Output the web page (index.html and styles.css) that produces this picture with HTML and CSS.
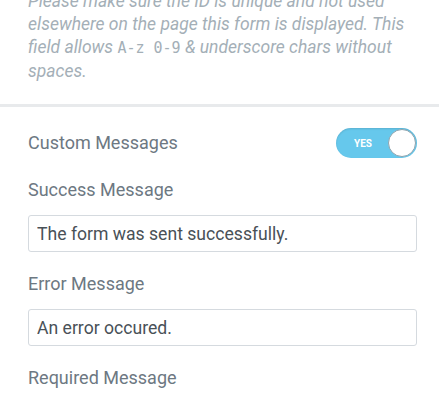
FILE: index.html
```html
<!DOCTYPE html>
<html lang="en">
<head>
    <meta charset="UTF-8">
    <meta name="viewport" content="width=device-width, initial-scale=1.0">
    <title>Form Settings</title>
    <link rel="stylesheet" href="styles.css">
</head>
<body>
    <div class="panel">
        <p class="field-help">Please make sure the ID is unique and not used elsewhere on the page this form is displayed. This field allows <code>A-z 0-9</code> &amp; underscore chars without spaces.</p>
    </div>

    <div class="separator"></div>

    <div class="panel controls">
        <div class="control control-inline">
            <label class="control-title">Custom Messages</label>
            <label class="switch">
                <input type="checkbox" class="switch-input" checked>
                <span class="switch-label">YES</span>
                <span class="switch-handle"></span>
            </label>
        </div>

        <div class="control">
            <label class="control-title" for="successMessage">Success Message</label>
            <input type="text" id="successMessage" class="text-input" value="The form was sent successfully.">
        </div>

        <div class="control">
            <label class="control-title" for="errorMessage">Error Message</label>
            <input type="text" id="errorMessage" class="text-input" value="An error occured.">
        </div>

        <div class="control">
            <label class="control-title" for="requiredMessage">Required Message</label>
            <input type="text" id="requiredMessage" class="text-input" value="This field is required.">
        </div>
    </div>
</body>
</html>
```

FILE: styles.css
```css
/* Form settings panel */
body {
    margin: 0;
    background-color: #fff;
    font-family: Roboto, Arial, sans-serif;
    color: #6d7882;
    overflow: hidden;
}

.panel {
    padding: 0 22px 0 28px;
}

.field-help {
    margin: -10px 0 0 0;
    font-size: 17.5px;
    line-height: 23px;
    font-style: italic;
    color: #a4afb7;
}

.field-help code {
    font-family: "DejaVu Sans Mono", monospace;
    font-style: normal;
    font-size: 15px;
}

.separator {
    height: 3px;
    margin-top: 21px;
    background-color: #e8eaec;
}

.controls {
    display: flex;
    flex-direction: column;
    gap: 22px;
    padding-top: 21px;
}

.control {
    display: flex;
    flex-direction: column;
    gap: 15px;
}

.control-inline {
    flex-direction: row;
    align-items: center;
    justify-content: space-between;
}

.control-title {
    font-size: 18px;
    line-height: 20px;
    color: #6d7882;
}

.text-input {
    box-sizing: border-box;
    width: 100%;
    height: 37px;
    margin: 0;
    padding: 0 8px;
    border: 1px solid #d5dadf;
    border-radius: 3px;
    font-family: Roboto, Arial, sans-serif;
    font-size: 17.6px;
    color: #495157;
    background-color: #fff;
    outline: none;
}

/* Yes/No switch */
.switch {
    position: relative;
    display: block;
    width: 81px;
    height: 30px;
    cursor: pointer;
}

.switch-input {
    display: none;
}

.switch-label {
    display: flex;
    align-items: center;
    height: 100%;
    padding-left: 18px;
    border-radius: 15px;
    background-color: #66c8ec;
    box-shadow: inset 0 1px 2px rgba(0, 0, 0, 0.12);
    font-size: 10px;
    font-weight: bold;
    color: #fff;
    box-sizing: border-box;
}

.switch-handle {
    position: absolute;
    top: 1px;
    right: 1px;
    width: 28px;
    height: 28px;
    box-sizing: border-box;
    border: 1px solid #8fa3ad;
    border-radius: 50%;
    background-color: #fff;
}
```
